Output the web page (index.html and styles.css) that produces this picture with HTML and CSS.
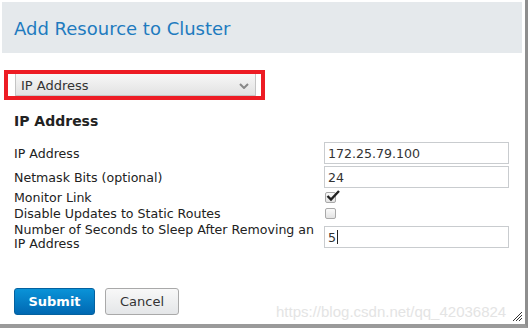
FILE: index.html
```html
<!DOCTYPE html>
<html lang="en">
<head>
    <meta charset="UTF-8">
    <meta name="viewport" content="width=device-width, initial-scale=1.0">
    <title>Add Resource to Cluster</title>
    <link rel="stylesheet" href="styles.css">
</head>
<body>
    <div class="dialog">
        <div class="header">
            <h1 class="title">Add Resource to Cluster</h1>
        </div>

        <!-- resource type picker (highlighted) -->
        <div class="highlight">
            <div class="select">
                <span>IP Address</span>
                <svg class="chevron" width="10" height="6" viewBox="0 0 10 6">
                    <path d="M1 1 L5 5 L9 1" fill="none" stroke="#888" stroke-width="2"/>
                </svg>
            </div>
        </div>

        <h2 class="section">IP Address</h2>

        <div class="fields">
            <label class="lbl">IP Address</label>
            <div class="field"><div class="text-input">172.25.79.100</div></div>

            <label class="lbl">Netmask Bits (optional)</label>
            <div class="field"><div class="text-input">24</div></div>

            <label class="lbl small">Monitor Link</label>
            <div class="field small">
                <span class="check">
                    <svg width="14" height="12" viewBox="0 0 14 12">
                        <path d="M1.5 6 L5 9.5 L13 1" fill="none" stroke="#222" stroke-width="2.4"/>
                    </svg>
                </span>
            </div>

            <label class="lbl small">Disable Updates to Static Routes</label>
            <div class="field small"><span class="check"></span></div>

            <label class="lbl long">Number of Seconds to Sleep After Removing an IP Address</label>
            <div class="field"><div class="text-input">5<span class="caret"></span></div></div>
        </div>

        <div class="actions">
            <button class="btn btn-primary">Submit</button>
            <button class="btn btn-default">Cancel</button>
        </div>

        <div class="watermark">https://blog.csdn.net/qq_42036824</div>
        <svg class="grip" width="12" height="12" viewBox="0 0 12 12">
            <path d="M11 2 L2 11 M11 5 L5 11 M11 8 L8 11" stroke="#333" stroke-width="1"/>
        </svg>
    </div>
</body>
</html>
```

FILE: styles.css
```css
body {
    margin: 0;
    background: #fff;
    font-family: "DejaVu Sans", Verdana, sans-serif;
    color: #222;
}

.dialog {
    position: relative;
    width: 528px;
    height: 328px;
    box-sizing: border-box;
    padding-top: 2px;
    border-right: 3px solid #8e8e8e;
    border-bottom: 4px solid #9a9a9a;
    overflow: hidden;
}

.header {
    margin: 0 3px 0 2px;
    height: 51px;
    background: #e5e9ec;
    display: flex;
    align-items: center;
    padding-left: 12px;
}

.title {
    margin: 0;
    font-size: 18px;
    font-weight: normal;
    color: #1e7bbf;
    padding-top: 2px;
}

.highlight {
    margin: 17px 0 0 4px;
    width: 261px;
    height: 30px;
    box-sizing: border-box;
    border: 4px solid #ed1c24;
    padding: 0 5px 0 7px;
    display: flex;
    align-items: stretch;
}

.select {
    flex: 1;
    display: flex;
    align-items: center;
    justify-content: space-between;
    padding: 2px 6px 0 5px;
    border: 1px solid #c4c4c4;
    border-top: none;
    background: linear-gradient(#f7f7f7, #e2e2e2);
    font-size: 13px;
    color: #333;
}

.chevron {
    margin-top: 1px;
}

.section {
    margin: 13px 0 0 14px;
    font-size: 14px;
    font-weight: bold;
    color: #222;
}

.fields {
    display: grid;
    grid-template-columns: 310px 185px;
    row-gap: 2px;
    margin: 13px 0 0 14px;
    font-size: 12.6px;
}

.lbl {
    display: flex;
    align-items: center;
    color: #222;
}

.lbl.small {
    height: 14px;
}

.lbl.long {
    line-height: 14px;
    padding-top: 1px;
    padding-bottom: 1px;
}

.field {
    display: flex;
    align-items: center;
}

.field.small {
    padding-left: 1px;
}

.text-input {
    width: 100%;
    height: 22px;
    box-sizing: border-box;
    border: 1px solid #c9cccf;
    padding: 0 3px;
    display: flex;
    align-items: center;
    font-size: 12.6px;
    color: #333;
}

.caret {
    display: inline-block;
    width: 1px;
    height: 14px;
    background: #222;
    margin-left: 1px;
}

.check {
    position: relative;
    width: 11px;
    height: 11px;
    box-sizing: border-box;
    border: 1px solid #a9a9a9;
    border-radius: 2px;
    background: linear-gradient(#fafafa, #e3e3e3);
}

.check svg {
    position: absolute;
    left: 0;
    top: -3px;
}

.actions {
    display: flex;
    gap: 10px;
    margin: 36px 0 0 14px;
}

.btn {
    height: 27px;
    box-sizing: border-box;
    border-radius: 3px;
    font-family: "DejaVu Sans", Verdana, sans-serif;
    font-size: 13px;
    padding: 0;
}

.btn-primary {
    width: 81px;
    border: 1px solid #04619f;
    background: linear-gradient(#0a93d8, #0068b2);
    color: #fff;
    font-weight: bold;
}

.btn-default {
    width: 74px;
    border: 1px solid #a9a9a9;
    background: linear-gradient(#f8f8f8, #e4e6e8);
    color: #333;
}

.watermark {
    position: absolute;
    left: 276px;
    top: 303px;
    font-family: "Liberation Sans", Arial, sans-serif;
    font-size: 15px;
    color: #e4e4e4;
}

.grip {
    position: absolute;
    right: 2px;
    bottom: 2px;
}
```
